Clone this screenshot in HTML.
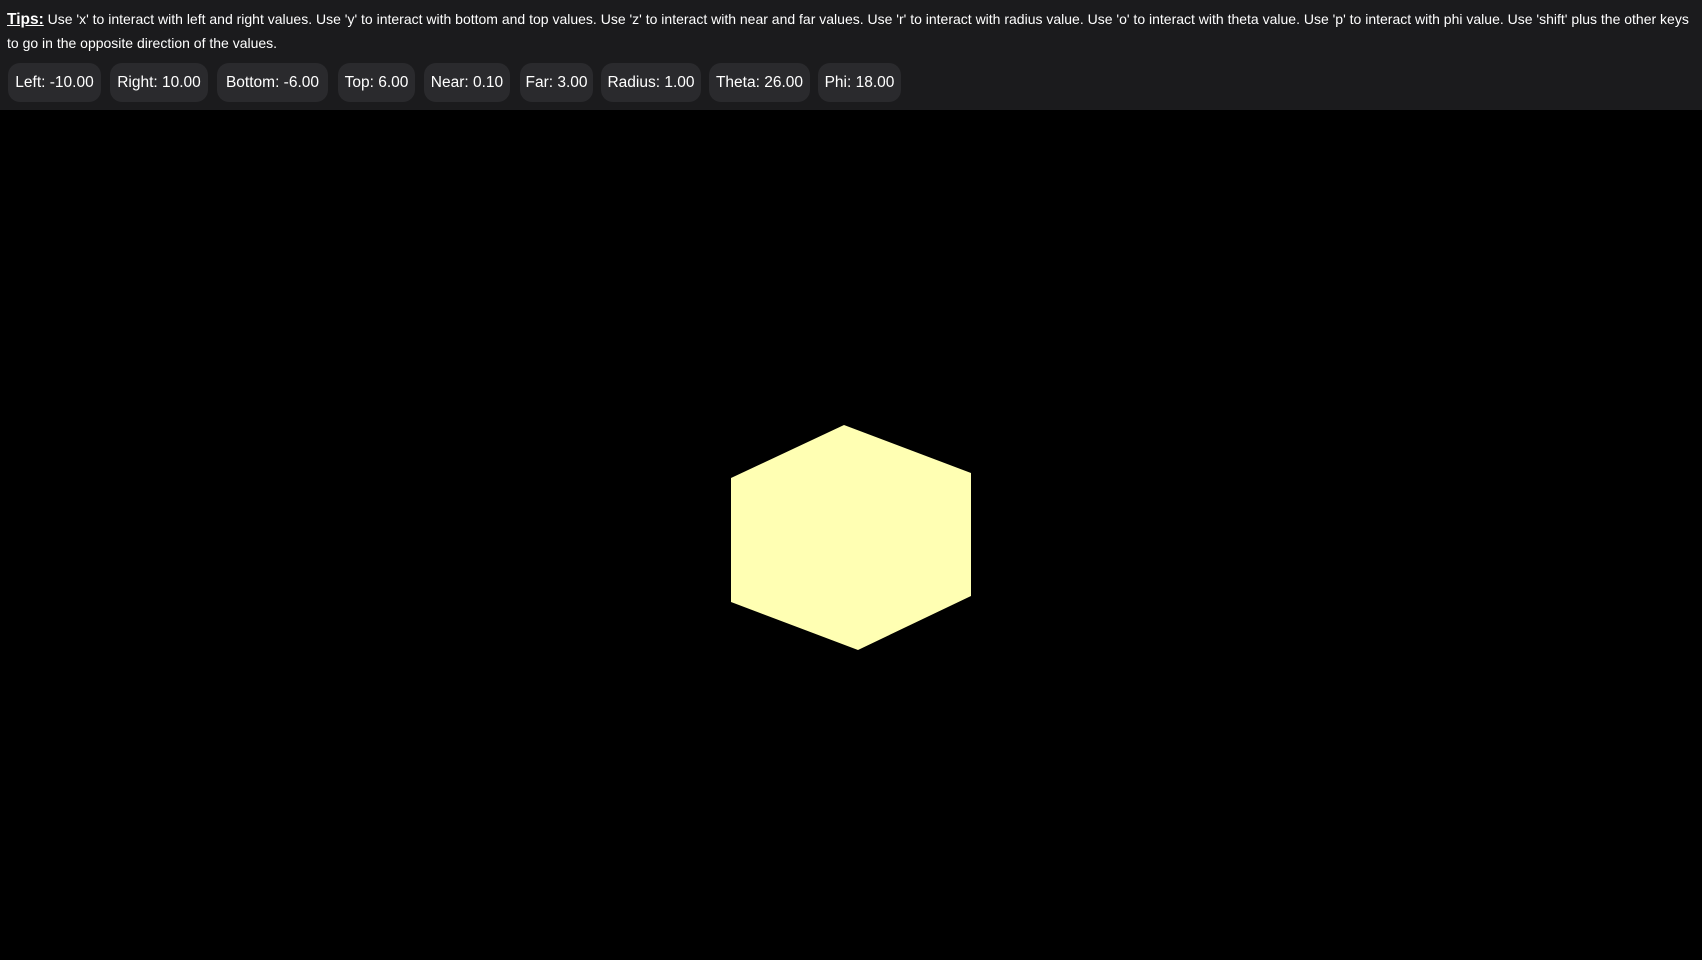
<!DOCTYPE html>
<html><head><style>
html,body{margin:0;padding:0;width:1702px;height:960px;background:#000;overflow:hidden;font-family:"Liberation Sans",sans-serif;color:#fff}
#hdr{position:absolute;left:0;top:0;width:1702px;height:110px;background:#1b1b1d}
.tip{position:absolute;left:7px;font-size:14px;white-space:nowrap}
.tip b{text-decoration:underline;font-size:15.5px}
.btn{position:absolute;top:63px;height:39px;background:#2a2a2d;border-radius:12px;font-size:15.5px;line-height:39px;text-align:center;white-space:nowrap}
</style></head><body>
<div id="hdr">
<div class="tip" style="top:11px"><b>Tips:</b> Use 'x' to interact with left and right values. Use 'y' to interact with bottom and top values. Use 'z' to interact with near and far values. Use 'r' to interact with radius value. Use 'o' to interact with theta value. Use 'p' to interact with phi value. Use 'shift' plus the other keys</div>
<div class="tip" style="top:35px">to go in the opposite direction of the values.</div>
<div class="btn" style="left:8px;width:93px">Left: -10.00</div>
<div class="btn" style="left:110px;width:98px">Right: 10.00</div>
<div class="btn" style="left:217px;width:111px">Bottom: -6.00</div>
<div class="btn" style="left:338px;width:77px">Top: 6.00</div>
<div class="btn" style="left:424px;width:86px">Near: 0.10</div>
<div class="btn" style="left:520px;width:73px">Far: 3.00</div>
<div class="btn" style="left:601px;width:100px">Radius: 1.00</div>
<div class="btn" style="left:709px;width:101px">Theta: 26.00</div>
<div class="btn" style="left:818px;width:83px">Phi: 18.00</div>
</div>
<svg style="position:absolute;left:0;top:0" width="1702" height="960"><polygon points="844,425 971,473 971,596 858,650 731,602 731,478" fill="#ffffb3"/></svg>
</body></html>
